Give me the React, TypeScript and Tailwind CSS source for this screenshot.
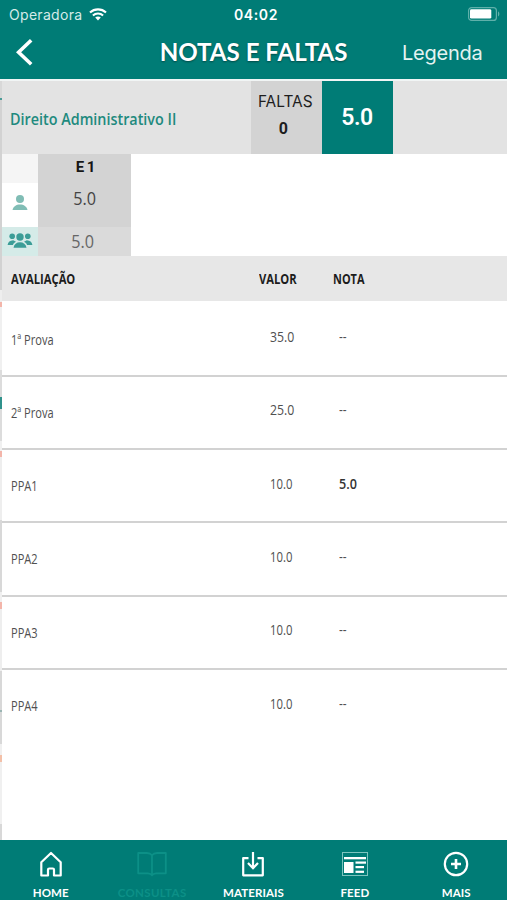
import React from 'react';

const avaliacoes = [
  { nome: '1ª Prova', valor: '35.0', nota: '--' },
  { nome: '2ª Prova', valor: '25.0', nota: '--' },
  { nome: 'PPA1', valor: '10.0', nota: '5.0' },
  { nome: 'PPA2', valor: '10.0', nota: '--' },
  { nome: 'PPA3', valor: '10.0', nota: '--' },
  { nome: 'PPA4', valor: '10.0', nota: '--' },
];

// slices of the previous screen that stay visible on the left edge
const faixas = [
  'h-[17px] bg-[#d8d8d8]',
  'h-[2px] bg-[#4a9b96]',
  'h-[190px] bg-[#d2d2d2]',
  'h-[12px] bg-[#eeeeee]',
  'h-[5px] bg-[#f3b5aa]',
  'h-[63px] bg-[#f0f0f0]',
  'h-[27px] bg-[#dcdcdc]',
  'h-[12px] bg-[#2f918b]',
  'h-[32px] bg-[#dcdcdc]',
  'h-[10px] bg-[#f0f0f0]',
  'h-[6px] bg-[#f3b5aa]',
  'h-[63px] bg-[#eeeeee]',
  'h-[72px] bg-[#d8d8d8]',
  'h-[10px] bg-[#f0f0f0]',
  'h-[7px] bg-[#f3b5aa]',
  'h-[62px] bg-[#eeeeee]',
  'h-[39px] bg-[#d8d8d8]',
  'h-[2px] bg-[#9ab5b3]',
  'h-[32px] bg-[#d8d8d8]',
  'h-[11px] bg-[#f0f0f0]',
  'h-[7px] bg-[#f3c0a8]',
  'h-[62px] bg-[#f0f0f0]',
  'h-[16px] bg-[#d8d8d8]',
];

function StatusBar() {
  return (
    <div className="flex h-7 items-center pl-[9px] pr-[7px] text-white font-['Inter',sans-serif]">
      <div className="flex w-[180px] items-center gap-[7px]">
        <span className="w-[73px] whitespace-nowrap text-[14px] tracking-[0.3px] text-[#d5ebe9]">Operadora</span>
        <svg width="18" height="13" viewBox="0 0 18 13" fill="none" stroke="white" strokeWidth="2.1">
          <path d="M1 4.5C5.5 0.3 12.5 0.3 17 4.5" />
          <path d="M3.9 7.5C6.8 4.9 11.2 4.9 14.1 7.5" />
          <path d="M6.2 9.5C7.8 8.1 10.2 8.1 11.8 9.5L9 12.4Z" fill="white" stroke="none" />
        </svg>
      </div>
      <div className="flex-1 pb-px pl-[3px] text-center">
        <span className="text-[14px] font-semibold tracking-[0.6px]">04:02</span>
      </div>
      <div className="flex w-[180px] justify-end">
        <svg width="32" height="14" viewBox="0 0 32 14">
          <rect x="0.6" y="0.6" width="27.8" height="12.8" rx="3" fill="none" stroke="#5fb0aa" strokeWidth="1.2" />
          <rect x="2" y="2.2" width="21.3" height="9.4" rx="1.4" fill="white" />
          <path d="M30 4.6C31.8 5.2 31.8 8.8 30 9.4Z" fill="#5fb0aa" />
        </svg>
      </div>
    </div>
  );
}

function Header() {
  return (
    <header className="h-[79px] bg-[#007c76] text-white">
      <StatusBar />
      <div className="flex h-12 items-center pl-[15px] pr-[25px]">
        <div className="w-[90px]">
          <svg width="18" height="28" viewBox="0 0 18 28" fill="none" stroke="white" strokeWidth="3.6">
            <path d="M16.2 2.2L3.6 14.2L16.2 26.2" />
          </svg>
        </div>
        <h1 className="flex-1 whitespace-nowrap text-center font-['Lato',sans-serif] text-[24.1px] font-bold [text-shadow:0_1px_2px_rgba(0,0,0,0.4)]">
          NOTAS E FALTAS
        </h1>
        <span className="w-[80px] whitespace-nowrap pt-px font-['Inter',sans-serif] text-[20px] tracking-[-0.25px] text-[#e4f3f1]">Legenda</span>
      </div>
    </header>
  );
}

function Disciplina() {
  return (
    <section className="flex h-[73px] bg-[#e3e3e3]">
      <div className="flex w-[249px] items-center pl-2 pt-[2px]">
        <h2 className="origin-left scale-x-[0.845] whitespace-nowrap font-['Open_Sans',sans-serif] text-[17px] font-semibold text-[#1e8a7e]">
          Direito Administrativo II
        </h2>
      </div>
      <div className="flex w-[70.5px] flex-col items-center bg-[#d3d3d3] pt-[10px] text-[#1e1e1e]">
        <span className="pr-[2px] font-['Inter',sans-serif] text-[15.4px] leading-[21px]">FALTAS</span>
        <span className="pt-[6px] pr-[6px] font-['Roboto',sans-serif] text-[16px] font-bold leading-[21px]">0</span>
      </div>
      <div className="flex w-[71px] items-center justify-center bg-[#007c76] pt-[2px]">
        <span className="font-['Roboto',sans-serif] text-[23px] font-semibold tracking-[-0.4px] text-white">5.0</span>
      </div>
    </section>
  );
}

function Etapas() {
  return (
    <section className="flex h-[102px] bg-white font-['Roboto',sans-serif]">
      <div className="flex w-9 flex-col">
        <div className="h-[29px] bg-[#f5f5f5]"></div>
        <div className="flex h-11 items-start justify-center pt-[11px]">
          <svg width="16" height="17" viewBox="0 0 16 17" fill="#80bdb5">
            <circle cx="8" cy="5" r="4" />
            <path d="M0.5 16C1.3 12.5 4.2 10.6 8 10.6S14.7 12.5 15.5 16Z" />
          </svg>
        </div>
        <div className="flex h-[29px] items-start justify-center bg-[#d5ebe8] pt-[5px]">
          <svg width="26" height="17" viewBox="0 0 26 17" fill="#3b9d97">
            <circle cx="5.2" cy="4.2" r="2.8" />
            <circle cx="20.8" cy="4.2" r="2.8" />
            <circle cx="13" cy="5" r="3.7" />
            <path d="M0.6 13C1 10 3 8.5 6.2 8.3L9 9.8C7.1 10.6 6.3 11.6 6 13Z" />
            <path d="M25.4 13C25 10 23 8.5 19.8 8.3L17 9.8C18.9 10.6 19.7 11.6 20 13Z" />
            <path d="M6.5 15.8C7.2 12 9.5 10.2 13 10.2S18.8 12 19.5 15.8Z" />
          </svg>
        </div>
      </div>
      <div className="w-[92.5px]">
        <div className="flex h-[73px] flex-col items-center bg-[#d3d3d3]">
          <span className="pt-[3px] pl-[2px] text-[15px] font-bold leading-5 tracking-[-0.6px] text-[#161616]">E 1</span>
          <span className="pt-[9px] scale-x-[0.9] font-['Open_Sans',sans-serif] text-[18px] leading-6 text-[#444]">5.0</span>
        </div>
        <div className="flex h-[29px] items-center justify-center bg-[#dadada] pr-[3px] pb-[2px]">
          <span className="scale-x-[0.9] font-['Open_Sans',sans-serif] text-[18px] leading-6 text-[#666]">5.0</span>
        </div>
      </div>
    </section>
  );
}

function Tabela() {
  return (
    <section className="flex-1 bg-white font-['Open_Sans',sans-serif]">
      <div className="flex h-[45px] items-center bg-[#e7e7e7] pl-[9px] text-[14px] font-bold text-[#1c1c1c]">
        <div className="w-[248px]"><span className="inline-block origin-left scale-x-[0.8]">AVALIAÇÃO</span></div>
        <div className="w-[74px]"><span className="inline-block origin-left scale-x-[0.8]">VALOR</span></div>
        <div><span className="inline-block origin-left scale-x-[0.78]">NOTA</span></div>
      </div>
      <div className="pt-[2.4px]">
        {avaliacoes.map((item, i) => (
          <div
            key={item.nome}
            className={`flex h-[73.3px] items-center border-b-2 pl-[9px] text-[14px] text-[#505050] ${i < avaliacoes.length - 1 ? 'border-[#d2d2d2]' : 'border-transparent'}`}
          >
            <div className="w-[259px]"><span className="inline-block origin-left scale-x-[0.79]">{item.nome}</span></div>
            <div className="w-[69px] pb-[5px]">
              <span className={`inline-block origin-left ${item.valor === '10.0' ? 'scale-x-[0.81]' : 'scale-x-[0.88]'}`}>{item.valor}</span>
            </div>
            <div className="pb-[5px]">
              <span className={`inline-block origin-left ${item.nota === '--' ? 'scale-x-[0.85]' : 'scale-x-[0.9] font-semibold text-[#333]'}`}>{item.nota}</span>
            </div>
          </div>
        ))}
      </div>
    </section>
  );
}

function IconHome() {
  return (
    <svg width="24" height="27" viewBox="0 0 24 27" fill="none" stroke="white" strokeWidth="2.2" strokeLinejoin="round">
      <path d="M2.3 11.2L12 2L21.7 11.2V24.5H15V18.7Q15 17.5 13.8 17.5H10.2Q9 17.5 9 18.7V24.5H2.3Z" />
    </svg>
  );
}

function IconConsultas() {
  return (
    <svg width="30" height="27" viewBox="0 0 30 27" fill="none" stroke="#0c9087" strokeWidth="1.8" strokeLinejoin="round">
      <path d="M15 4.2C13.7 2.6 12 2 10 2H1.2V22.3H11C13 22.3 14.2 23 15 24.4C15.8 23 17 22.3 19 22.3H28.8V2H20C18 2 16.3 2.6 15 4.2V24" />
    </svg>
  );
}

function IconMateriais() {
  return (
    <svg width="24" height="27" viewBox="0 0 24 27" fill="none" stroke="white" strokeWidth="2.2">
      <path d="M7.5 7.1H2.2V24.3H21.8V7.1H16.5" strokeLinejoin="round" />
      <path d="M12 1V17M7 12L12 17.2L17 12" />
    </svg>
  );
}

function IconFeed() {
  return (
    <svg width="26" height="27" viewBox="0 0 26 27" fill="white">
      <rect x="0.5" y="1.5" width="25" height="23" fill="none" stroke="#7dc4bf" />
      <rect x="2" y="6" width="22" height="2.3" />
      <rect x="2" y="11" width="9.5" height="11" />
      <rect x="13.5" y="10.5" width="10.5" height="2.2" />
      <rect x="13.5" y="15" width="8.5" height="2.2" />
      <rect x="13.5" y="19.7" width="8.5" height="2.2" />
    </svg>
  );
}

function IconMais() {
  return (
    <svg width="26" height="27" viewBox="0 0 26 27" fill="none" stroke="white">
      <circle cx="13" cy="13" r="11.2" strokeWidth="2.2" />
      <path d="M13 8V18M8 13H18" strokeWidth="2.6" />
    </svg>
  );
}

const abas = [
  { label: 'HOME', Icon: IconHome },
  { label: 'CONSULTAS', Icon: IconConsultas },
  { label: 'MATERIAIS', Icon: IconMateriais },
  { label: 'FEED', Icon: IconFeed },
  { label: 'MAIS', Icon: IconMais },
];

function TabBar() {
  return (
    <nav className="grid h-[60px] grid-cols-5 bg-[#007c76] font-['Lato',sans-serif] text-[11.5px] font-bold leading-[14px]">
      {abas.map(({ label, Icon }) => (
        <div key={label} className="flex flex-col items-center pt-[11px]">
          <Icon />
          <span className={`pt-2 ${label === 'CONSULTAS' ? 'tracking-[0.35px] text-[#0c9087]' : 'tracking-[0.1px] text-white'}`}>{label}</span>
        </div>
      ))}
    </nav>
  );
}

export default function App() {
  return (
    <div className="flex h-[900px] w-[507px] flex-col overflow-hidden bg-white">
      <Header />
      <div className="h-[2px] bg-[#f1f5f5]"></div>
      <main className="flex h-[759px]">
        <div className="w-[2px] overflow-hidden">
          {faixas.map((faixa, i) => (
            <div key={i} className={faixa}></div>
          ))}
        </div>
        <div className="flex flex-1 flex-col">
          <Disciplina />
          <Etapas />
          <Tabela />
        </div>
      </main>
      <TabBar />
    </div>
  );
}
